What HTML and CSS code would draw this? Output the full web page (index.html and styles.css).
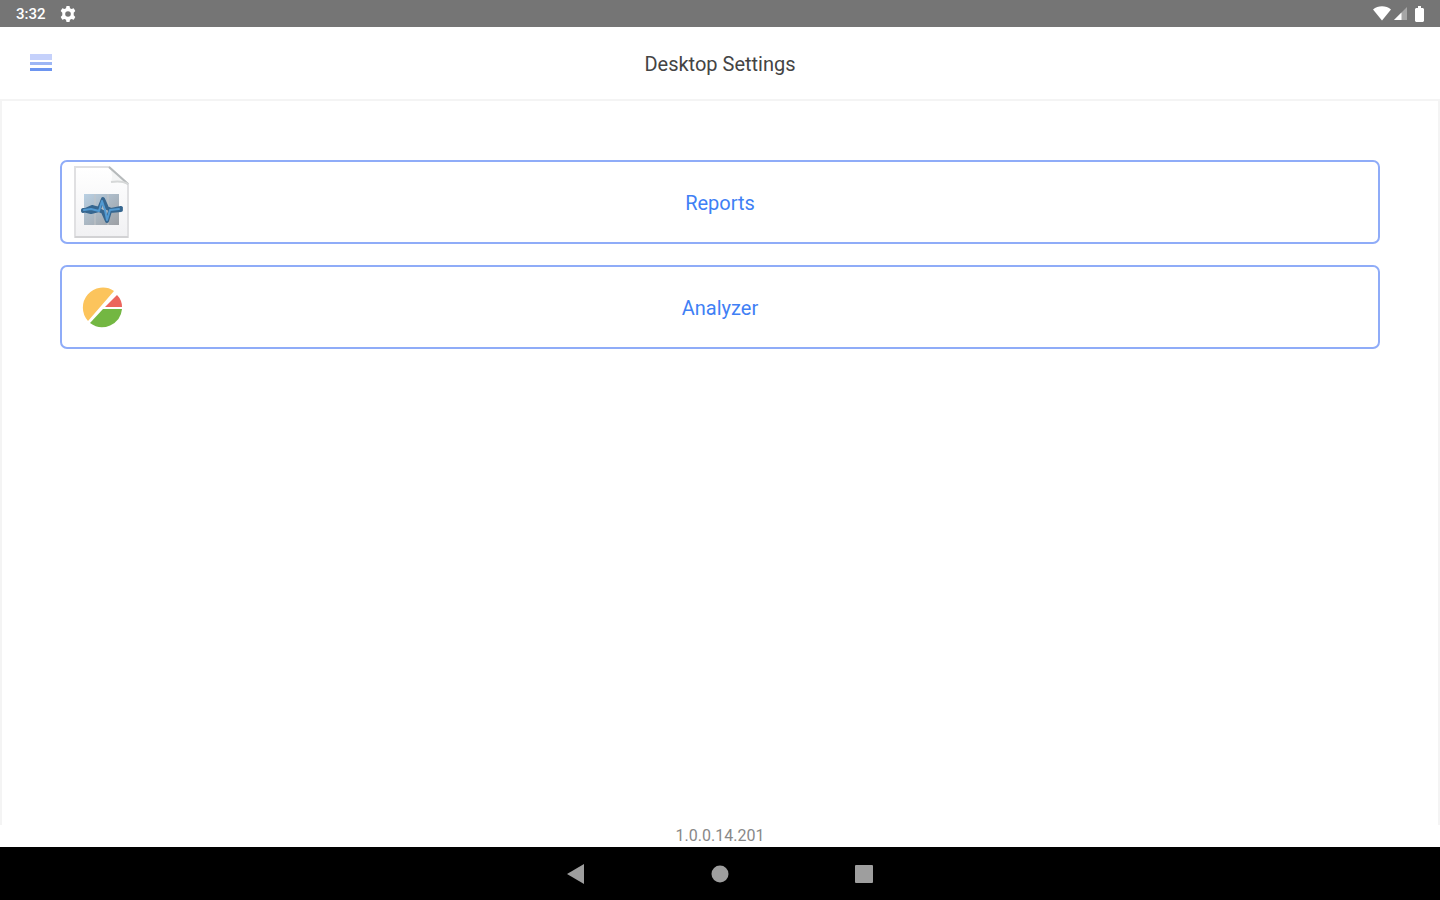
FILE: index.html
```html
<!DOCTYPE html>
<html lang="en">

<head>
  <meta charset="UTF-8">
  <meta name="viewport" content="width=device-width, initial-scale=1.0">
  <title>Desktop Settings</title>
  <link rel="stylesheet" href="styles.css">
</head>

<body>

  <div class="status-bar">
    <div class="status-left">
      <span class="clock">3:32</span>
      <svg width="16" height="16" viewBox="0 0 16 16" aria-hidden="true">
        <path d="M6.5 0h3l.5 2.2 1.5.8 2.2-.7 1.6 2.7-1.600 1.800v2.400l1.600 1.800-1.600 2.700-2.200-.7-1.500.8-.5 2.200h-3L6 13.800 4.500 13l-2.200.7L.7 11l1.600-1.800V6.800L.7 5l1.600-2.700 2.200.7L6 2.200z" fill="#fff"/>
        <circle cx="8" cy="8" r="2.800" fill="#757575"/>
      </svg>
    </div>
    <div class="status-right">
      <svg width="18" height="15" viewBox="0 0 18 15" aria-hidden="true">
        <path d="M0 3.500C5-.8 13-.8 18 3.500L9 14.500z" fill="#fff"/>
      </svg>
      <svg width="13" height="13" viewBox="0 0 13 13" aria-hidden="true">
        <path d="M0 13L13 0v13z" fill="#a6a6a6"/>
        <path d="M0 13l7.500-7.500V13z" fill="#fff"/>
      </svg>
      <svg class="battery" width="9" height="16" viewBox="0 0 9 16" aria-hidden="true">
        <path d="M3 0h3v2h2l1 1v12l-1 1H1l-1-1V3l1-1h2z" fill="#fff"/>
      </svg>
    </div>
  </div>

  <header class="header">
    <button class="menu-button" type="button" aria-label="Menu">
      <svg width="22" height="18" viewBox="0 0 22 18" aria-hidden="true">
        <path d="M0 0h22v6H0z" fill="#c5d1fb"/>
        <path d="M0 8h22v3H0z" fill="#9db6f5"/>
        <path d="M0 14h22v3H0z" fill="#6d95f0"/>
      </svg>
    </button>
    <h1 class="title">Desktop Settings</h1>
  </header>

  <main class="content">
    <button class="option" type="button">
      <svg class="option-icon" width="58" height="74" viewBox="0 0 58 74" aria-hidden="true">
        <defs>
          <linearGradient id="paper" x1="0" y1="0" x2="0" y2="1">
            <stop offset="0" stop-color="#fff"/>
            <stop offset="1" stop-color="#f1f1f3"/>
          </linearGradient>
          <linearGradient id="chart" x1="0" y1="0" x2="1" y2="1">
            <stop offset="0" stop-color="#b9d0e3"/>
            <stop offset="1" stop-color="#9c9fa3"/>
          </linearGradient>
        </defs>
        <path d="M3 2h34l19 17v53H3z" fill="url(#paper)" stroke="#e0e0e2" stroke-width="2"/>
        <path d="M3 72h53" fill="none" stroke="#d2d2d4" stroke-width="2"/>
        <path d="M37 2l19 17c-5-3-11-3-17-2 2-5 1-11-2-15z" fill="#f4f5f5"/>
        <path d="M37 2l19 17" fill="none" stroke="#b6babb" stroke-width="2"/>
        <path d="M39 17c6-1 12-1 17 2" fill="none" stroke="#d6d8d8" stroke-width="2"/>
        <path d="M12 29h35v31H12z" fill="url(#chart)"/>
        <path d="M12 44h35M23 29v31M36 29v31" fill="none" stroke="#c2c5c8"/>
        <path d="M11 46l9-4 7 2 4-10 4 9 4 2 10-2" fill="none" stroke="#36668f" stroke-width="4" stroke-linejoin="round" stroke-linecap="round"/>
        <path d="M11 45l8 2 8-2 4 2 4 9 3-10 11-1" fill="none" stroke="#36668f" stroke-width="4" stroke-linejoin="round" stroke-linecap="round"/>
        <path d="M12 45l7-1 8 2 3-10 3 9 2 10 3-10 9-1" fill="none" stroke="#529ad2" stroke-width="2" stroke-linejoin="round" stroke-linecap="round"/>
      </svg>
      <span class="option-label">Reports</span>
    </button>

    <button class="option" type="button">
      <svg class="option-icon" width="58" height="74" viewBox="0 0 58 74" aria-hidden="true">
        <path d="M16 51A20 20 0 0 1 42 21z" fill="#fcc45c"/>
        <path d="M45 25q5 5 5 12H33z" fill="#ec655d"/>
        <path d="M31 39h19A20 20 0 0 1 18 53z" fill="#73b742"/>
      </svg>
      <span class="option-label">Analyzer</span>
    </button>
  </main>

  <footer class="version">1.0.0.14.201</footer>

  <nav class="nav-bar">
    <button class="nav-button" type="button" aria-label="Back">
      <svg width="20" height="20" viewBox="0 0 20 20" aria-hidden="true">
        <path d="M1 10L18 0v20z" fill="#9e9e9e"/>
      </svg>
    </button>
    <button class="nav-button" type="button" aria-label="Home">
      <svg width="20" height="20" viewBox="0 0 20 20" aria-hidden="true">
        <circle cx="10" cy="10" r="8.500" fill="#9e9e9e"/>
      </svg>
    </button>
    <button class="nav-button" type="button" aria-label="Recent apps">
      <svg width="20" height="20" viewBox="0 0 20 20" aria-hidden="true">
        <rect x="1" y="1" width="18" height="18" rx="1" fill="#9e9e9e"/>
      </svg>
    </button>
  </nav>

</body>

</html>
```
FILE: styles.css
```css
body {
  display: flex;
  flex-direction: column;
  min-height: 100vh;
  margin: 0;
  background-color: #fff;
  font-family: Roboto, sans-serif;
}

button {
  padding: 0;
  border: none;
  background: none;
  font-family: inherit;
  cursor: pointer;
}

svg {
  display: block;
}

/* Status bar */
.status-bar {
  display: flex;
  justify-content: space-between;
  height: 27px;
  padding: 0 16px;
  background-color: #757575;
  color: #fff;
}

.status-left,
.status-right {
  display: flex;
  align-items: center;
}

.status-left {
  gap: 14px;
}

.status-right {
  gap: 3px;
}

.clock {
  font-size: 15px;
  font-weight: 500;
}

.battery {
  margin-left: 5px;
}

/* Header */
.header {
  display: grid;
  grid-template-columns: 1fr auto 1fr;
  align-items: center;
  height: 72px;
  padding: 0 30px;
}

.menu-button {
  justify-self: start;
}

.title,
.option-label {
  margin: 0;
  padding-top: 2px;
  font-size: 20px;
  font-weight: 400;
  line-height: 24px;
}

.title {
  color: #444;
}

/* Options */
.content {
  display: flex;
  flex: 1;
  flex-direction: column;
  gap: 21px;
  padding: 59px 58px;
  border: 2px solid #f4f4f4;
  border-bottom: none;
}

.option {
  display: grid;
  grid-template-columns: 1fr auto 1fr;
  align-items: center;
  height: 84px;
  padding: 0 10px;
  border: 2px solid #8facf8;
  border-radius: 7px;
}

.option-label {
  color: #3f80f5;
}

.version {
  font-size: 16px;
  line-height: 22px;
  text-align: center;
  color: #888;
}

/* Navigation bar */
.nav-bar {
  display: flex;
  justify-content: center;
  gap: 124px;
  height: 53px;
  background-color: #000;
}

.nav-button {
  width: 20px;
}
```
